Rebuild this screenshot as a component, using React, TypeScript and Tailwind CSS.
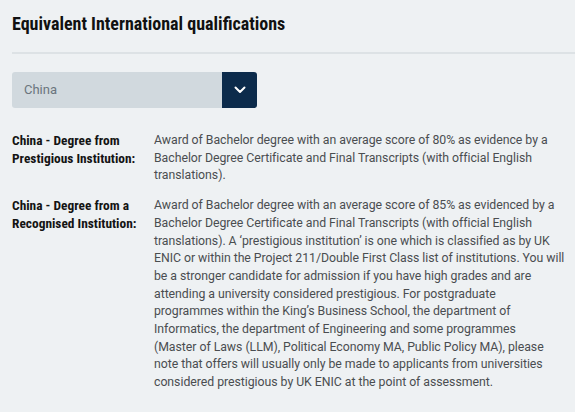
const ROWS = [
  {
    label: ['China - Degree from', 'Prestigious Institution:'],
    lines: [
      'Award of Bachelor degree with an average score of 80% as evidence by a',
      'Bachelor Degree Certificate and Final Transcripts (with official English',
      'translations).',
    ],
  },
  {
    label: ['China - Degree from a', 'Recognised Institution:'],
    lines: [
      'Award of Bachelor degree with an average score of 85% as evidenced by a',
      'Bachelor Degree Certificate and Final Transcripts (with official English',
      'translations). A \u2018prestigious institution\u2019 is one which is classified as by UK',
      'ENIC or within the Project 211/Double First Class list of institutions. You will',
      'be a stronger candidate for admission if you have high grades and are',
      'attending a university considered prestigious. For postgraduate',
      'programmes within the King\u2019s Business School, the department of',
      'Informatics, the department of Engineering and some programmes',
      '(Master of Laws (LLM), Political Economy MA, Public Policy MA), please',
      'note that offers will usually only be made to applicants from universities',
      'considered prestigious by UK ENIC at the point of assessment.',
    ],
  },
]

export default function App() {
  return (
    <div className="min-h-[412px] w-[575px] bg-[#eef1f3] pl-3 pt-[12px] font-['Roboto',sans-serif]">
      <h2 className="font-['Roboto_Condensed','Roboto',sans-serif] text-[18px] font-bold leading-[24px] text-[#111]">
        Equivalent International qualifications
      </h2>

      <div className="mt-[16px] h-[2px] bg-[#dde2e5]" />

      {/* Country select */}
      <div className="mt-[18px] flex h-[36px] w-[245px] overflow-hidden rounded-[3px]">
        <div className="flex flex-1 items-center bg-[#d1d9de] pl-3 text-[13px] text-[#6b757d]">China</div>
        <div className="flex w-[35px] items-center justify-center bg-[#0c2b4b]">
          <svg width="12" height="8" viewBox="0 0 12 8" fill="none">
            <path d="M1.5 1.5 6 6l4.5-4.5" stroke="#fff" strokeWidth="2" strokeLinecap="round" strokeLinejoin="round" />
          </svg>
        </div>
      </div>

      <div className="mt-[24px] flex flex-col gap-[12px]">
        {ROWS.map((row) => (
          <div key={row.label[0]} className="flex leading-[17.7px]">
            <div className="w-[142px] shrink-0 font-['Roboto_Condensed','Roboto',sans-serif] text-[13.4px] font-bold text-[#141414]">
              {row.label.map((l) => (
                <div key={l}>{l}</div>
              ))}
            </div>
            <p className="text-[12.3px] tracking-[-0.04px] whitespace-nowrap text-[#4a4d50]">
              {row.lines.map((l) => (
                <span key={l} className="block">{l}</span>
              ))}
            </p>
          </div>
        ))}
      </div>
    </div>
  )
}
